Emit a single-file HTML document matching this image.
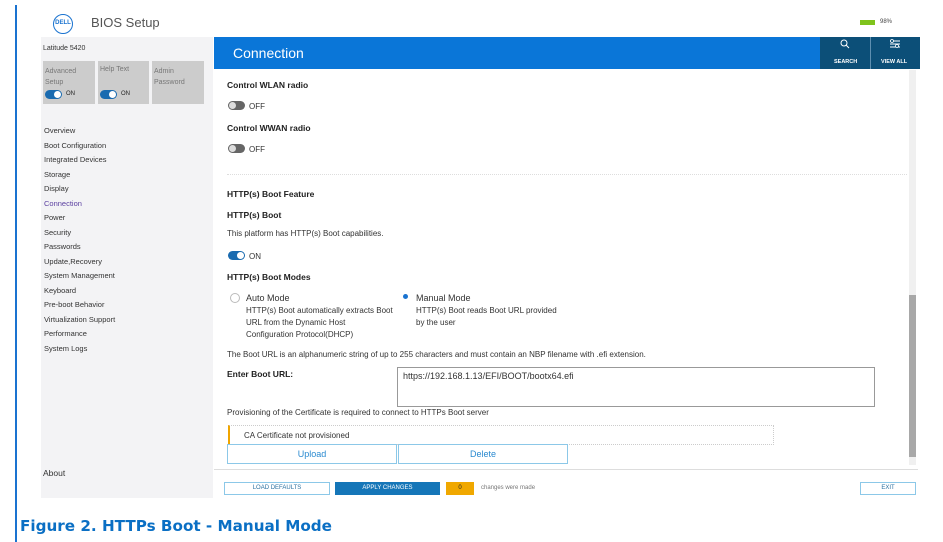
<!DOCTYPE html>
<html><head><style>
body{margin:0;width:943px;height:542px;background:#fff;font-family:"Liberation Sans",sans-serif;position:relative;overflow:hidden;color:#222}
.a{position:absolute}
.t{font-size:8px;color:#333}
.b{font-size:8.5px;font-weight:bold;color:#222}
.nav{font-size:7.5px;color:#333}
.tog{position:absolute;width:17px;height:9px;border-radius:5px;background:#1a6bb0}
.tog:after{content:"";position:absolute;right:1px;top:1px;width:7px;height:7px;border-radius:50%;background:#fff}
.off{background:#666}
.off:after{left:1px;right:auto;background:#ddd}
.btn{box-sizing:border-box;font-size:6px;text-align:center;line-height:11px}
</style></head><body>
<div class="a" style="left:15px;top:5px;width:2px;height:537px;background:#1a73d0"></div>
<div class="a" style="left:53px;top:14px;width:20px;height:20px;border:1.5px solid #1a73d0;border-radius:50%;box-sizing:border-box;font-size:6px;color:#1a73d0;font-weight:bold;text-align:center;line-height:17px">DELL</div>
<div class="a" style="left:91px;top:15px;font-size:13px;color:#555">BIOS Setup</div>
<div class="a" style="left:860px;top:20px;width:15px;height:5px;background:#7fc31c"></div>
<div class="a" style="left:880px;top:19px;font-size:6px;color:#444">98%</div>
<div class="a" style="left:41px;top:37px;width:172px;height:461px;background:#f3f3f5"></div>
<div class="a t" style="left:43px;top:45px;font-size:7px">Latitude 5420</div>
<div class="a" style="left:43px;top:61px;width:52px;height:43px;background:#ccc"></div>
<div class="a" style="left:98px;top:61px;width:51px;height:43px;background:#ccc"></div>
<div class="a" style="left:152px;top:61px;width:52px;height:43px;background:#ccc"></div>
<div class="a" style="left:45px;top:66px;font-size:7px;color:#777;line-height:11px">Advanced<br>Setup</div>
<div class="a" style="left:100px;top:66px;font-size:7px;color:#777">Help Text</div>
<div class="a" style="left:154px;top:66px;font-size:7px;color:#777;line-height:11px">Admin<br>Password</div>
<div class="tog" style="left:45px;top:90px"></div><div class="a" style="left:66px;top:91px;font-size:6px">ON</div>
<div class="tog" style="left:100px;top:90px"></div><div class="a" style="left:121px;top:91px;font-size:6px">ON</div>
<div class="a nav" style="left:44px;top:124px;line-height:14.5px">Overview<br>Boot Configuration<br>Integrated Devices<br>Storage<br>Display<br><span style="color:#5a3fa0">Connection</span><br>Power<br>Security<br>Passwords<br>Update,Recovery<br>System Management<br>Keyboard<br>Pre-boot Behavior<br>Virtualization Support<br>Performance<br>System Logs</div>
<div class="a" style="left:43px;top:468px;font-size:8.5px;color:#333">About</div>
<div class="a" style="left:214px;top:37px;width:606px;height:32px;background:#0a76d8"></div>
<div class="a" style="left:233px;top:45px;font-size:14px;color:#fff">Connection</div>
<div class="a" style="left:820px;top:37px;width:100px;height:32px;background:#0c4f78"></div>
<div class="a" style="left:870px;top:37px;width:1px;height:32px;background:#5e8fb0"></div>
<div class="a" style="left:834px;top:59px;font-size:5.5px;color:#fff;font-weight:bold">SEARCH</div>
<div class="a" style="left:881px;top:59px;font-size:5.5px;color:#fff;font-weight:bold">VIEW ALL</div>
<svg class="a" style="left:838px;top:38px" width="14" height="12"><circle cx="6" cy="5" r="3" fill="none" stroke="#fff" stroke-width="1"/><path d="M8 7l3 3" stroke="#fff"/></svg>
<svg class="a" style="left:888px;top:38px" width="14" height="12"><path d="M2 3h10M2 6h10M2 9h10" stroke="#fff" stroke-width="1"/><circle cx="4" cy="3" r="1.5" fill="#0c4f78" stroke="#fff" stroke-width=".8"/><circle cx="9" cy="8" r="1.5" fill="#0c4f78" stroke="#fff" stroke-width=".8"/></svg>
<div class="a" style="left:909px;top:70px;width:7px;height:395px;background:#f0f0f0"></div>
<div class="a" style="left:909px;top:295px;width:7px;height:162px;background:#a8a8a8"></div>
<div class="a b" style="left:227px;top:80px">Control WLAN radio</div>
<div class="tog off" style="left:228px;top:101px"></div><div class="a t" style="left:249px;top:102px">OFF</div>
<div class="a b" style="left:227px;top:123px">Control WWAN radio</div>
<div class="tog off" style="left:228px;top:144px"></div><div class="a t" style="left:249px;top:145px">OFF</div>
<div class="a" style="left:227px;top:174px;width:680px;border-top:1px dotted #ddd"></div>
<div class="a b" style="left:227px;top:189px">HTTP(s) Boot Feature</div>
<div class="a b" style="left:227px;top:210px">HTTP(s) Boot</div>
<div class="a t" style="left:227px;top:229px">This platform has HTTP(s) Boot capabilities.</div>
<div class="tog" style="left:228px;top:251px"></div><div class="a t" style="left:249px;top:252px">ON</div>
<div class="a b" style="left:227px;top:272px">HTTP(s) Boot Modes</div>
<div class="a" style="left:230px;top:293px;width:8px;height:8px;border:1px solid #bbb;border-radius:50%"></div>
<div class="a t" style="left:246px;top:293px;font-size:9px">Auto Mode</div>
<div class="a t" style="left:246px;top:305px;line-height:12px">HTTP(s) Boot automatically extracts Boot<br>URL from the Dynamic Host<br>Configuration Protocol(DHCP)</div>
<div class="a" style="left:403px;top:294px;width:5px;height:5px;background:#1a73d0;border-radius:50%"></div>
<div class="a t" style="left:416px;top:293px;font-size:9px">Manual Mode</div>
<div class="a t" style="left:416px;top:305px;line-height:12px">HTTP(s) Boot reads Boot URL provided<br>by the user</div>
<div class="a t" style="left:227px;top:350px">The Boot URL is an alphanumeric string of up to 255 characters and must contain an NBP filename with .efi extension.</div>
<div class="a b" style="left:227px;top:369px">Enter Boot URL:</div>
<div class="a" style="left:397px;top:367px;width:476px;height:38px;border:1px solid #999"></div>
<div class="a t" style="left:403px;top:371px;font-size:9px">https://192.168.1.13/EFI/BOOT/bootx64.efi</div>
<div class="a t" style="left:227px;top:408px">Provisioning of the Certificate is required to connect to HTTPs Boot server</div>
<div class="a" style="left:228px;top:425px;width:543px;height:18px;border:1px dotted #ccc;border-left:2px solid #f0a500"></div>
<div class="a t" style="left:244px;top:431px">CA Certificate not provisioned</div>
<div class="a" style="left:227px;top:444px;width:170px;height:20px;border:1px solid #8cc8e8;box-sizing:border-box;text-align:center;font-size:9px;color:#2a8ad0;line-height:19px">Upload</div>
<div class="a" style="left:398px;top:444px;width:170px;height:20px;border:1px solid #8cc8e8;box-sizing:border-box;text-align:center;font-size:9px;color:#2a8ad0;line-height:19px">Delete</div>
<div class="a" style="left:214px;top:469px;width:704px;border-top:1px solid #ddd"></div>
<div class="a btn" style="left:224px;top:482px;width:106px;height:13px;border:1px solid #8cc8e8;color:#2a70a0">LOAD DEFAULTS</div>
<div class="a btn" style="left:335px;top:482px;width:105px;height:13px;background:#1576b8;color:#fff;line-height:13px">APPLY CHANGES</div>
<div class="a btn" style="left:446px;top:482px;width:28px;height:13px;background:#f0a800;line-height:13px">0</div>
<div class="a" style="left:481px;top:485px;font-size:6px;color:#777">changes were made</div>
<div class="a btn" style="left:860px;top:482px;width:56px;height:13px;border:1px solid #8cc8e8;color:#2a70a0">EXIT</div>
<div class="a" style="left:20px;top:517px;font-size:15.2px;font-weight:bold;color:#0a6fc4;font-family:'DejaVu Sans',sans-serif">Figure 2. HTTPs Boot - Manual Mode</div>
</body></html>
